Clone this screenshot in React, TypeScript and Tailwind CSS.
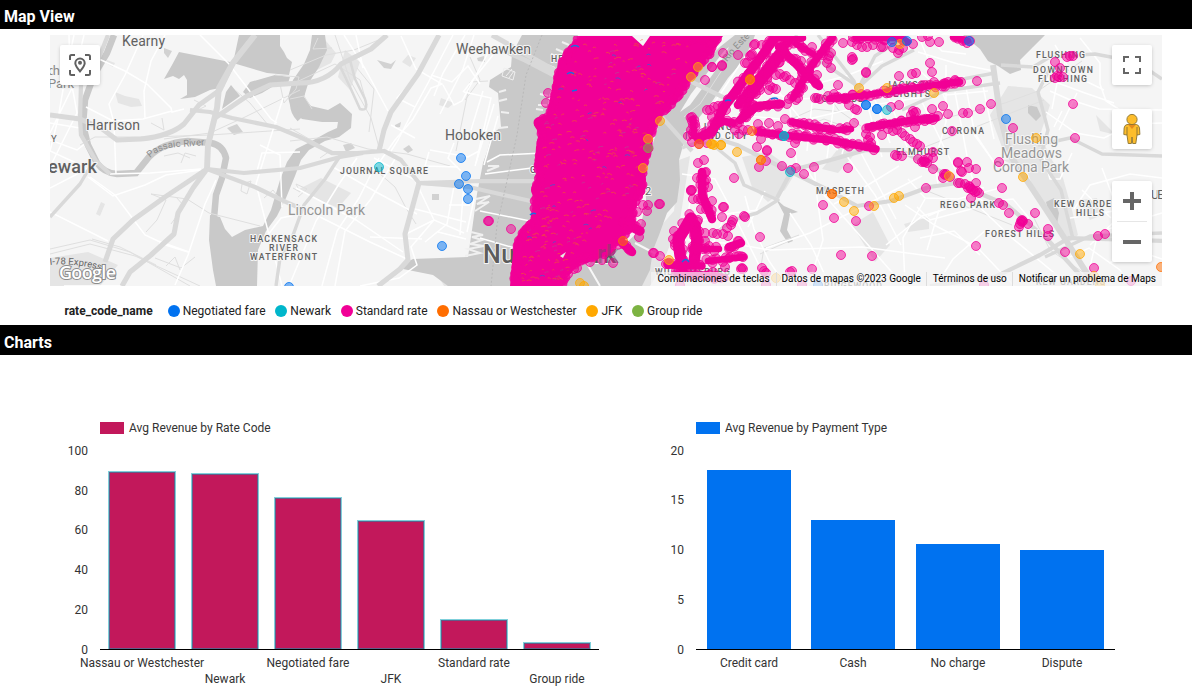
import React from "react";

type Pt = [number, number];

const PINK = "#f10096";
const BLUE = "#0072f0";
const TEAL = "#00b6cb";
const ORANGE = "#ff6d00";
const AMBER = "#ffa800";
const GREEN = "#7cb342";

const legend = [
  { name: "Negotiated fare", color: "bg-[#0072f0]" },
  { name: "Newark", color: "bg-[#00b6cb]" },
  { name: "Standard rate", color: "bg-[#f10096]" },
  { name: "Nassau or Westchester", color: "bg-[#ff6d00]" },
  { name: "JFK", color: "bg-[#ffa800]" },
  { name: "Group ride", color: "bg-[#7cb342]" },
];

const water = [
  "M179 52L230 62L224 87L210 90L195 97L180 99L187 95L187 80L184 75L179 79L173 76L164 79L172 65Z",
  "M239 35L280 35L280 46L284 52L287 58L292 62L289 75L278 74L267 73L233 63Z",
  "M231 85L240 96L222 109L226 92Z M250 82L275 75L290 77L288 83L272 87L262 93L250 98L243 92Z",
  "M312 35H325L327 50L319 67L308 84L304 97L311 106L328 110L340 103L352 114L351 128L339 137L325 141L309 150L301 160L295 176L286 198L277 216L266 231L258 250L257 286H216L213 270L209 240L210 215L220 217L225 229L232 237L245 230L263 226L271 210L280 180L287 162L296 149L310 142L328 132L337 128L338 122L322 122L302 119L291 109L288 97L293 80L304 64L310 50Z",
  "M522 35L512 54L511 67L490 80L489 87L498 93L501 127L492 134L487 152L483 163L477 194L472 230L468 257L413 259L401 265L398 268L433 275L448 286H512L540 190L549 95L578 35Z",
  "M735 35L721 46L704 62L688 88L664 107L654 140L645 168L646 200L640 230L622 247L580 265L560 286H642L650 270L653 250L659 235L667 213L677 202L680 180L679 160L684 142L697 120L711 103L728 78L748 55L755 35Z",
  "M963 35H1045L1033 47L1020 60L1021 70L1010 74L998 66L988 61L980 49Z",
  "M1046 202l8 -4l5 15l-2 11l-6 -4Z M1028 105l9 2l4 9l-5 5l-8 -8Z",
  "M776 199l8 7l14 6l-8 2l-3 16l6 11l-5 2l-8 -12l4 -17Z",
];

const parks = [
  "M1008 86L1032 88L1050 105L1040 135L1052 160L1063 178L1072 210L1078 235L1066 245L1050 215L1034 190L1025 165L1003 150L990 115Z",
  "M115 92L125 96L139 99L142 106L131 107L118 103Z",
  "M50 258L88 252L118 265L100 286H50Z",
  "M101 202l4 2l-5 12l-4 -2Z M107 60l8 3l-2 4l-7 -4Z",
  "M742 157L768 152L796 172L785 190L768 202L752 187Z",
  "M841 145L860 148L838 173L822 169Z",
  "M852 225L873 212L890 245L875 262Z",
  "M297 190l24 -12l30 15l-13 15Z",
  "M904 224l25 -7v12l-21 3Z M1003 160l30 -3l28 17l-19 5Z",
  "M321 35l15 18l-5 10l-20 10l8 -20Z M345 50l15 12l-10 28l-12 -13Z",
  "M408 55l8 3l-6 9l-8 -5Z M441 98l13 5l-6 5l-9 -3Z",
  "M653 235L674 211L679 160L690 156L680 220L660 270L650 286H640Z",
  "M1080 200l17 -2l3 18l-10 4Z M1096 115l20 20l-16 -4Z",
  "M434 269l30 2l8 15h-28Z",
];

const darkPatches = "M164 48l8 3l-4 7l-4 -5Z M227 128l10 -4l6 8l-9 3Z M403 149l6 -4l4 5l-5 3Z M395 125l6 -3l-1 5l-5 1Z M477 58l7 -2l1 6l-7 -1Z M377 60l14 4l5 -4l-5 9l-7 -1Z M432 194h7v6h-7Z M343 145l8 -2l4 5l-9 4Z";

const rivers = [
  "M114 35L107 53L94 75L85 100L83 125L88 145L97 163Q104 173 117 174L136 173L149 157Q162 143 188 141L211 143Q223 145 226 158L222 178L216 195L214 218",
  "M303 92Q286 104 300 119",
];

const highways: { d: string; w: number }[] = [
  { d: "M108 35L98 60L81 84L80 119L81 135L96 161L110 174", w: 5 },
  { d: "M50 115L80 119M80 119L101 128L117 140L141 139Q170 136 184 124L199 105L220 90L234 61L255 35", w: 6 },
  { d: "M255 35L233 63L219 88L217 108L208 145L207 169", w: 7 },
  { d: "M190 110L210 112L232 118L276 127L300 137L332 153L357 153L384 151L401 160L419 183L456 184", w: 5 },
  { d: "M300 83L270 85L247 96L215 118M300 83Q326 83 341 64L371 49L387 35", w: 6 },
  { d: "M439 35L418 74L391 112L384 130L379 151", w: 6 },
  { d: "M207 169L165 197L133 220L113 239L105 262", w: 6 },
  { d: "M207 169L193 188L178 213L174 234L151 255L130 272L122 286", w: 6 },
  { d: "M207 169L244 173L300 168L340 157L363 153", w: 5 },
  { d: "M207 169L255 187L286 202L302 209", w: 5 },
  { d: "M419 183L405 234L408 260L400 269L378 286", w: 6 },
  { d: "M340 156L325 179L304 205L292 238L280 258L276 286", w: 4 },
  { d: "M50 217L80 184L90 167", w: 4 },
  { d: "M339 64L350 87L360 109Q369 112 365 99L355 79L350 60", w: 3 },
  { d: "M419 183L469 187L535 202M419 183L480 181L542 181", w: 5 },
  { d: "M498 48L525 60L575 86M492 35L575 82", w: 6 },
  { d: "M682 148Q700 139 713 145L735 163L744 185L778 200L757 213L733 220L710 237L680 256", w: 4 },
  { d: "M690 130L737 145L777 165L832 192L857 206L891 201L929 187L965 182", w: 5 },
  { d: "M777 198L792 170L827 161L866 150L899 150L930 165L967 188L1007 205L1048 240L1090 286", w: 5 },
  { d: "M993 65L1000 115L1010 155L1047 211L1067 242L1095 286", w: 7 },
  { d: "M930 286L995 277L1040 255L1069 238L1162 241", w: 5 },
  { d: "M1049 70L1038 92L1048 130L1040 158L1061 190L1073 239", w: 4 },
  { d: "M1038 145L1070 138L1102 154L1162 156", w: 4 },
  { d: "M1001 65L1033 67L1050 57L1095 54L1137 62L1162 79", w: 4 },
  { d: "M795 35L817 59L859 87L875 56L895 43", w: 4 },
  { d: "M859 87L882 66L914 50M818 35L854 81L859 97", w: 4 },
  { d: "M920 87L995 73M902 110L944 91L1000 83", w: 4 },
  { d: "M1045 257L1090 236L1162 233", w: 4 },
  { d: "M692 82L737 104M660 115L692 151", w: 5 },
];

const minorGray = [
  "M50 249L90 240L130 252L190 286M50 254L90 244L135 256L200 286M92 239L120 247L156 265",
  "M151 194L166 200L157 220L146 232M151 194L187 199L209 213L260 226M176 197l8 9l-13 18",
  "M80 145L95 137L150 137L210 135L300 129M164 139L210 133L245 117L300 90",
  "M192 113L206 106L194 100M235 90L250 103L268 125M275 75L299 77L296 89L284 103L280 84",
  "M164 156L178 153L190 158M181 163l4 -10l11 3M151 123l13 7l-2 -12M155 258l26 10l14 -11M166 266l9 -9l5 13",
  "M290 70L326 55L354 50L381 39M335 35L350 80L371 118L380 151M357 68L374 89L369 132",
  "M290 85L335 64L360 80L367 105M318 38L313 49L332 48M290 99l14 -3l8 13",
  "M290 128L330 151L320 158M290 141L327 137L368 149L407 154L450 166",
  "M293 188l7 4l-4 -8l11 5l-9 8M379 173L395 187L406 208L416 224",
  "M242 184l9 -3l-4 13l-6 -3ZM264 198l9 -8l6 8",
  "M470 57L480 80L465 100M456 151L470 82L488 81",
  "M780 124L814 109L841 112L861 126M780 137L824 119L854 130",
  "M684 117L700 104L722 70M783 58L814 76L840 112",
  "M930 122L1005 103L1038 91L1082 61M925 147L1044 100",
  "M1030 210L1050 250L1090 277M920 188L962 205L1012 225",
  "M761 266L764 248L799 235M760 254L787 242M688 200L710 207",
];

const streets = [
  "M143 35L125 75L109 104L114 123L116 174M50 140L77 150L86 143M50 123L80 128M165 35L151 61L144 91L145 119M99 59L125 71L147 84L171 108L172 112L184 109M172 111L143 119L113 121L86 107",
  "M74 35L65 78L58 119L50 151M69 35L70 75L77 113L50 167M84 35L71 90L50 133M50 212L108 241M90 177L115 195L145 235L158 241L189 252",
  "M50 151L74 162L87 169L50 188M88 177L113 196L145 185L166 175L201 170M110 174L150 173L201 169",
  "M200 35L229 64L271 119L277 123M216 180L205 204L188 255L175 285M188 252L159 243M64 286L120 286M257 171L262 153L300 152",
  "M283 98L256 184L282 286M260 145L280 155L282 207M264 240L281 218L295 215",
  "M344 35L364 67L388 111M356 35L363 68M401 36L416 69L442 84L431 88L413 119L395 140L376 167",
  "M453 35L443 54L428 83L415 107L398 140L391 151M465 35L443 73L434 96M443 85L454 105L462 101L490 49",
  "M474 35L463 69L440 114M464 92L491 98L476 163M454 143L448 158L461 171M463 92L493 55",
  "M391 125L415 138M415 107L397 98L414 79M430 150L468 157L479 151M429 152L425 166L458 167",
  "M357 158L339 184L316 221L289 286M379 158L359 198L337 231L322 286M395 159L371 199L345 231L335 286",
  "M374 158L415 180L434 220L464 233M333 167L376 192L417 214M296 188L356 220L403 252M320 217L370 242L407 259",
  "M434 220L411 247L417 265L399 278L360 286M404 235L434 220M415 209L466 222M370 237L422 239",
  "M454 186L447 224L425 242M464 183L460 235M449 205H470M474 199L467 232M438 232L466 239",
  "M483 91L471 130M494 104L475 166M498 116L484 165M431 75L452 82L468 66L480 84",
  "M487 162L500 155L543 153M485 174L540 167M480 211L540 223M480 238L525 251",
  "M714 113L715 102L754 43M720 127L754 72L775 36M748 115L779 69M750 116L800 121L860 107L930 96",
  "M753 69L779 92L800 118L838 150M756 92L802 99L862 94M790 109L798 175M812 103L807 151M834 102L827 158M855 108L842 154",
  "M865 96L882 157M872 91L890 143M885 88L907 147M898 86L921 155M811 85L846 76L883 61",
  "M682 174L715 179L729 205L709 254M692 185L684 248M680 226L732 213L758 210M688 240L735 244L770 250L862 247L945 258",
  "M745 196L754 229L769 261L786 286M733 213L757 261L768 286M765 191L748 227M790 213L811 245L830 286M766 248L810 233L883 196L922 176",
  "M807 170L825 196L855 230L904 286M814 163L817 197L823 240L808 286M834 204L858 191L899 166M846 155L875 195L901 245M860 151L896 219",
  "M926 35L942 51L966 54M918 52L958 64L994 71M918 35L935 76L949 108M946 65L946 122L938 150",
  "M964 76L975 136L997 166M981 77L994 139M920 71L946 95L988 91M922 102L946 151L962 183M955 92L967 156",
  "M933 153L938 184L984 188M908 179L925 198L958 199L1000 188M976 135L997 167M966 158L979 199L1003 210",
  "M905 205L936 226L977 247L1014 286M925 199L903 238L905 284M928 216L957 203M920 238L954 231L980 255M939 210L927 250M970 198L1012 238L1064 281",
  "M937 284L953 259L987 229M917 207L930 220L975 208M886 245L922 216L946 209M983 202L1013 199L1029 218",
  "M1047 79L1085 93L1114 103M1055 45L1073 75L1104 90M1066 60L1057 83L1052 109M1080 38L1100 63L1100 84L1106 101L1131 117",
  "M1050 91L1068 99L1099 109L1162 110M1046 112L1076 133L1104 138L1132 124L1162 123M1062 111L1054 127M1077 93L1059 130",
  "M1043 154L1050 179L1060 179L1072 153M1074 209L1090 185L1130 174L1162 178M1102 168L1120 216L1090 245M1082 190L1111 218",
  "M1070 218L1114 211L1144 207M1070 257L1089 248L1120 270L1130 286M1090 267L1098 232L1162 213M1109 263L1138 251L1162 259",
];

const manhattan =
  "M580 36L572 45L560 60L554 77L551 95L546 116L538 117Q531 120 535 127L539 133L536 147L535 163L537 177L532 186Q529 192 535 197L533 203L530 222L520 231L514 243L512 263L510 286H563L567 272L580 263L600 258L612 248L622 238L635 222L633 207L645 190L646 180L643 163L650 153L652 137L658 120L667 108L677 100L687 83L700 67L713 50L723 36H650L643 46L632 36Z";

// Shoreline pickups that give the dense borough area its beaded edge.
const shore: Pt[][] = [
  [[580, 38], [563, 62], [558, 80], [555, 98], [551, 116], [539, 122], [543, 135], [540, 160], [540, 178], [536, 192], [536, 220], [524, 232], [518, 246], [515, 284]],
  [[562, 284], [568, 268], [585, 258], [607, 252], [618, 240], [631, 224], [632, 205], [641, 190], [642, 164], [647, 150], [648, 138], [655, 119], [676, 97], [697, 68], [719, 38]],
];

const bands: { p: Pt[]; w: number }[] = [
  { p: [[775, 38], [724, 107], [712, 132], [698, 138]], w: 12 },
  { p: [[791, 38], [773, 60], [738, 105]], w: 11 },
  { p: [[783, 55], [750, 98], [742, 118]], w: 9 },
  { p: [[832, 38], [812, 65], [793, 98]], w: 10 },
  { p: [[779, 47], [798, 66], [819, 86]], w: 11 },
  { p: [[775, 38], [803, 38]], w: 9 },
  { p: [[796, 44], [813, 54]], w: 9 },
  { p: [[740, 120], [757, 106], [781, 104]], w: 11 },
  { p: [[693, 119], [694, 136]], w: 9 },
  { p: [[706, 134], [722, 121], [733, 123]], w: 10 },
  { p: [[758, 132], [790, 136], [830, 140], [876, 149]], w: 10 },
  { p: [[792, 122], [809, 126], [834, 130]], w: 10 },
  { p: [[839, 130], [851, 129]], w: 9 },
  { p: [[868, 127], [914, 120], [936, 118]], w: 10 },
  { p: [[829, 99], [866, 95], [914, 88], [960, 82]], w: 9 },
  { p: [[856, 38], [900, 38], [908, 42]], w: 9 },
  { p: [[953, 37], [968, 41]], w: 9 },
  { p: [[702, 172], [702, 194], [712, 219]], w: 11 },
  { p: [[691, 218], [684, 230], [678, 240], [680, 255], [683, 266]], w: 14 },
  { p: [[695, 225], [697, 240], [694, 262]], w: 14 },
  { p: [[692, 249], [719, 249]], w: 9 },
  { p: [[708, 261], [744, 257]], w: 9 },
  { p: [[668, 265], [702, 266]], w: 10 },
  { p: [[729, 247], [741, 243]], w: 11 },
  { p: [[678, 274], [725, 278]], w: 10 },
  { p: [[619, 240], [632, 252]], w: 11 },
  { p: [[622, 222], [640, 231]], w: 12 },
  { p: [[661, 38], [715, 40]], w: 8 },
];

const hash = (n: number) => {
  const v = Math.sin(n * 127.1 + 11.7) * 43758.5453;
  return v - Math.floor(v);
};

// Places points along a polyline at a fixed step, each pushed off the line by up to `spread`.
function along(line: Pt[], step: number, spread: number, seed: number): Pt[] {
  const out: Pt[] = [];
  line.slice(1).forEach((b, i) => {
    const a = line[i];
    const n = Math.max(1, Math.round(Math.hypot(b[0] - a[0], b[1] - a[1]) / step));
    for (let k = 0; k < n; k++) {
      const r = seed * 97 + i * 31 + k;
      out.push([
        a[0] + ((b[0] - a[0]) * k) / n + (hash(r) - 0.5) * 2 * spread,
        a[1] + ((b[1] - a[1]) * k) / n + (hash(r + 0.37) - 0.5) * 2 * spread,
      ]);
    }
  });
  return out;
}

const bandDots = bands.flatMap((b, i) => along(b.p, 3.2, b.w / 3.6, i + 1));
const shoreDots = shore.flatMap((s, i) => along(s, 3, 1.6, i + 60));

const pink: Pt[] = [
  [488, 221], [489, 221], [511, 229], [548, 93], [546, 103], [643, 205], [648, 205], [659, 204], [660, 204], [647, 211], [637, 212],
  [639, 237], [641, 224], [613, 263], [602, 260], [590, 262], [577, 268], [574, 269], [568, 274], [653, 253], [654, 253], [660, 256],
  [723, 53], [738, 55], [754, 45], [755, 44], [762, 45], [712, 67], [712, 67], [722, 65], [722, 66], [705, 80], [745, 63], [747, 63], [751, 55], [750, 56], [752, 54],
  [812, 47], [817, 75], [829, 56], [831, 53], [827, 63], [831, 68], [828, 59], [843, 43], [852, 57], [853, 59], [852, 60], [866, 73], [866, 72],
  [798, 64], [801, 61], [796, 59], [776, 75], [784, 77], [780, 74], [786, 76], [770, 86], [773, 88], [776, 89], [769, 90],
  [756, 94], [760, 90], [790, 80], [795, 83], [800, 87], [803, 88], [796, 93], [789, 99], [796, 100], [798, 98],
  [898, 53], [899, 50], [899, 76], [912, 74], [916, 73], [838, 85], [815, 98], [817, 98], [820, 99], [828, 96], [834, 94], [838, 97], [845, 99], [785, 119], [769, 123], [778, 126], [758, 124], [761, 139], [757, 147],
  [767, 151], [791, 153], [795, 143], [787, 104], [718, 106], [714, 107], [710, 110], [707, 110], [712, 117], [692, 117], [692, 121], [693, 125],
  [695, 124], [691, 130], [688, 136], [692, 142], [699, 144], [707, 143], [735, 130], [739, 134], [743, 130], [748, 130], [734, 122], [737, 124], [849, 105], [857, 110], [855, 109],
  [899, 105], [891, 107], [882, 135], [915, 127], [913, 111], [916, 112], [914, 113], [911, 115], [854, 123], [870, 137], [871, 143], [868, 140], [866, 134],
  [888, 129], [893, 131], [897, 130], [902, 133], [905, 136], [910, 139], [913, 142], [917, 144], [920, 146], [895, 155], [897, 156], [902, 156],
  [852, 42], [853, 37], [857, 45], [862, 47], [867, 47], [873, 45], [881, 47], [883, 47], [893, 48], [903, 48], [913, 44], [922, 37], [928, 36], [930, 42], [939, 42],
  [967, 43], [970, 41], [930, 63], [932, 72], [934, 82], [945, 83], [948, 82], [943, 84], [955, 80], [961, 82], [958, 82], [977, 81], [932, 109], [943, 106],
  [948, 114], [938, 116], [932, 118], [928, 119], [963, 113], [968, 113], [980, 109], [991, 104], [952, 131], [1013, 128],
  [1055, 62], [1067, 57], [1070, 56], [1073, 56], [1060, 68], [1055, 78], [1057, 76], [1059, 77], [1063, 77], [1073, 104], [1075, 138],
  [933, 152], [928, 158], [933, 158], [933, 169], [925, 162], [924, 160], [922, 162], [918, 159], [927, 163], [924, 162], [945, 175], [944, 174], [946, 174], [943, 178], [950, 177],
  [958, 163], [958, 162], [967, 162], [969, 168], [976, 169], [962, 172], [961, 171], [958, 183], [960, 183], [965, 184], [970, 187], [969, 186], [971, 189], [968, 188], [976, 183], [979, 193],
  [977, 191], [975, 192], [973, 190], [971, 198], [999, 162], [926, 188], [1002, 188], [999, 203], [1003, 205], [1009, 213], [1035, 213], [1022, 222], [1021, 221], [1023, 221], [1022, 220],
  [1020, 224], [1028, 224], [1019, 227], [1048, 229], [1048, 236], [976, 246], [1065, 252], [1098, 236], [1105, 234], [1094, 268], [1131, 281], [984, 285],
  [698, 163], [704, 160], [734, 178], [759, 167], [766, 161], [767, 150], [782, 166], [796, 168], [791, 170], [804, 174], [814, 167], [848, 168],
  [823, 205], [834, 218], [856, 221], [869, 206], [841, 255], [872, 256], [760, 237], [745, 217], [744, 216], [812, 269], [792, 271], [790, 272], [762, 268],
  [766, 273], [764, 271], [766, 285], [802, 285], [723, 207], [724, 207], [722, 217], [712, 201], [701, 209], [732, 222], [731, 225], [733, 220], [727, 228], [713, 233], [717, 234], [723, 234],
  [728, 236], [739, 241], [732, 247], [743, 257], [743, 269], [705, 233], [691, 190], [692, 190], [691, 191], [693, 199], [698, 199], [706, 172], [706, 180], [708, 187], [697, 178],
  [674, 231], [673, 239], [675, 246], [693, 219], [698, 220], [668, 264], [666, 264], [676, 271], [713, 272], [725, 267], [741, 269], [742, 268], [680, 285], [705, 241], [709, 246],
];
const amber: Pt[] = [
  [580, 283], [584, 286], [660, 121], [648, 139], [643, 168], [669, 260], [698, 67], [691, 77], [750, 80], [712, 144], [714, 145], [711, 144], [721, 145], [721, 145],
  [737, 152], [761, 160], [859, 88], [900, 44], [934, 93], [1036, 138], [1023, 177], [1080, 254], [949, 176], [844, 202], [854, 211],
  [874, 206], [894, 198], [899, 196], [776, 278], [1094, 276], [1100, 285], [887, 88],
];
const blue: Pt[] = [
  [461, 158], [466, 176], [459, 184], [468, 189], [468, 199], [442, 246], [289, 287], [892, 42], [907, 41], [866, 105], [866, 105],
  [877, 109], [877, 109], [1006, 119], [969, 41], [818, 285],
];
const orange: Pt[] = [[699, 144], [752, 131], [750, 79], [832, 194], [832, 194], [1161, 267], [623, 241], [761, 160]];
const teal: Pt[] = [[379, 167], [790, 172], [887, 110], [784, 136], [784, 136]];
const green: Pt[] = [[648, 148]];

const flecks = Array.from({ length: 330 }, (_, i) => {
  const y = 40 + hash(i) * 242;
  const left = y < 120 ? 582 - (y - 36) * 0.45 : y < 220 ? 544 - (y - 120) * 0.08 : 529 - (y - 220) * 0.2;
  const right = y < 110 ? 708 - (y - 36) * 0.65 : y < 195 ? 651 - (y - 110) * 0.13 : 630 - (y - 195) * 0.75;
  const x = left + hash(i + 500.5) * Math.max(0, right - left - 5);
  const w = 2 + Math.floor(hash(i + 900.3) * 4);
  return { d: `M${x.toFixed(1)} ${y.toFixed(1)}q${w / 2} -1.5 ${w} ${(i % 3) - 1}`, c: i % 17 === 0 ? "#1670e0" : i % 6 === 0 ? "#b44b92" : "#f4582f" };
});

function Dots({ pts, color, fill = 0.5 }: { pts: Pt[]; color: string; fill?: number }) {
  return (
    <g fill={color} fillOpacity={fill} stroke={color} strokeOpacity={0.75} strokeWidth={1}>
      {pts.map(([x, y], i) => (
        <circle key={i} cx={x} cy={y} r={4.5} />
      ))}
    </g>
  );
}

type Label = { t: string; x: number; y: number; w: number; s?: number; c?: string; b?: number };
const labels: Label[] = [
  { t: "Kearny", x: 122, y: 46, w: 43, s: 14 },
  { t: "Harrison", x: 86, y: 130, w: 54, s: 14 },
  { t: "ewark", x: 48, y: 173, w: 49, s: 18, b: 500 },
  { t: "ch", x: 48, y: 75, w: 12, s: 13, c: "#8a8a8a" },
  { t: "Park", x: 48, y: 88, w: 26, s: 13, c: "#8a8a8a" },
  { t: "Y", x: 51, y: 142, w: 6, s: 9.5 },
  { t: "Weehawken", x: 456, y: 54, w: 75, s: 14 },
  { t: "Hoboken", x: 445, y: 140, w: 56, s: 14 },
  { t: "JOURNAL SQUARE", x: 340, y: 174, w: 88 },
  { t: "Lincoln Park", x: 288, y: 215, w: 77, s: 14, c: "#959595" },
  { t: "HACKENSACK", x: 250, y: 242, w: 67 },
  { t: "RIVER", x: 269, y: 251, w: 29 },
  { t: "WATERFRONT", x: 250, y: 260, w: 67 },
  { t: "HELL'S KITCHEN", x: 551, y: 62, w: 80 },
  { t: "G", x: 530, y: 173, w: 7 },
  { t: "2", x: 645, y: 195, w: 7, s: 11 },
  { t: "LONG", x: 704, y: 130, w: 28 },
  { t: "ISLAND CITY", x: 685, y: 139, w: 62 },
  { t: "WOODSIDE", x: 813, y: 102, w: 50 },
  { t: "JACKSON", x: 886, y: 88, w: 46 },
  { t: "HEIGHTS", x: 886, y: 97, w: 44 },
  { t: "ELMHURST", x: 896, y: 155, w: 53 },
  { t: "CORONA", x: 942, y: 134, w: 42 },
  { t: "FLUSHING", x: 1036, y: 58, w: 49 },
  { t: "DOWNTOWN", x: 1033, y: 73, w: 60 },
  { t: "FLUSHING", x: 1038, y: 82, w: 49 },
  { t: "Flushing", x: 1005, y: 144, w: 53, s: 14, c: "#959595" },
  { t: "Meadows", x: 1001, y: 158, w: 61, s: 14, c: "#959595" },
  { t: "Corona Park", x: 993, y: 172, w: 76, s: 14, c: "#959595" },
  { t: "REGO PARK", x: 940, y: 208, w: 55 },
  { t: "MASPETH", x: 816, y: 194, w: 48 },
  { t: "FOREST HILLS", x: 985, y: 237, w: 69 },
  { t: "KEW GARDE", x: 1054, y: 207, w: 57 },
  { t: "HILLS", x: 1076, y: 216, w: 28 },
  { t: "UE", x: 1151, y: 199, w: 13, s: 12 },
  { t: "WILLIAMSBURG", x: 655, y: 275, w: 75 },
  { t: "RIDGEWOOD", x: 824, y: 289, w: 58 },
  { t: "KEW GARDENS", x: 1036, y: 285, w: 69 },
];

function MapCanvas() {
  return (
    <svg className="block h-[251px] w-[1112px]" viewBox="50 35 1112 251" fontFamily="Roboto, sans-serif">
      <rect x="50" y="35" width="1112" height="251" fill="#f5f5f5" />
      <g fill="#e5e5e5">{parks.map((d) => <path key={d} d={d} />)}</g>
      <g fill="#c9c9c9">{water.map((d) => <path key={d} d={d} />)}</g>
      <path d={darkPatches} fill="#d2d2d2" />
      <g stroke="#c9c9c9" strokeWidth="6.5" fill="none">{rivers.map((d) => <path key={d} d={d} />)}</g>
      <path d="M680 112L691 94L724 51L729 47L716 70L690 105Z" fill="#f5f5f5" />
      <path d="M471 232l12 3l-11 2l10 3l-12 4l14 2l-16 3l12 4l-15 3M476 199l14 -3l-13 8l12 -2l-14 9M488 166l11 0l-12 5M499 92l7 -2M499 101l8 -2M501 112l8 1M499 128l9 -1M547 105l-9 0M543 110l-7 -1M548 96l-8 -2M560 58l-9 -4M569 45l-7 -3M563 52l-7 -3M555 68l-8 -3" stroke="#f0f0f0" strokeWidth="2" fill="none" />
      <path d="M504 68l11 4l-2 8l-11 -4ZM506 76l6 -7M509 78l5 -7" fill="none" stroke="#efefef" strokeWidth="1" />
      <g stroke="#dfdfdf" strokeWidth="1" fill="none">{minorGray.map((d) => <path key={d} d={d} />)}</g>
      <g stroke="#ffffff" strokeWidth="1.5" fill="none">{streets.map((d) => <path key={d} d={d} />)}</g>
      <g stroke="#d9d9d9" fill="none" strokeLinejoin="round">
        {highways.map((h) => <path key={h.d} d={h.d} strokeWidth={h.w * 0.85} />)}
      </g>
      <path d="M542 35L526 75L517 135L505 190L497 225L491 286" stroke="#b4b4b4" strokeWidth="0.8" strokeDasharray="2 2" fill="none" />
      <path d="M586 262L600 286M635 243L658 255M658 255L680 265" stroke="#f7f7f7" strokeWidth="2" />
      <path id="passaic" d="M150 158Q160 148 178 147T206 145" fill="none" />
      <path id="express" d="M50 265Q72 262 104 271" fill="none" />
      <path id="este" d="M727 62Q740 45 760 28" fill="none" />
      <g fontSize="9.5" fill="#8d8d8d">
        <text><textPath href="#passaic">Passaic River</textPath></text>
        <text fill="#666"><textPath href="#express">I-78 Express</textPath></text>
        <text><textPath href="#este">Río Este</textPath></text>
      </g>
      <g paintOrder="stroke" stroke="#f5f5f5" strokeWidth="2" strokeLinejoin="round">
        {labels.map((l) => (
          <text key={l.t + l.x + l.y} x={l.x} y={l.y} fontSize={l.s ?? 8.7} fontWeight={l.b ?? (l.s ? 400 : 500)} fill={l.c ?? "#616161"} textLength={l.w}>
            {l.t}
          </text>
        ))}
        <text x="483" y="263" fontSize="25" fontWeight="500" fill="#5c5c5c" textLength="133">Nueva York</text>
      </g>
      <svg x="50" y="36" width="1112" height="250" viewBox="50 36 1112 250">
        <path d={manhattan} fill={PINK} />
        <g fill="none" stroke={PINK} strokeLinecap="round" strokeLinejoin="round">
          {bands.map((b, i) => <path key={i} d={"M" + b.p.map((q) => q.join(" ")).join("L")} strokeWidth={b.w - 2.5} />)}
        </g>
        <Dots pts={bandDots} color={PINK} />
        <Dots pts={shoreDots} color={PINK} fill={0.8} />
        <g fill="none" strokeWidth="0.9" opacity="0.7">
          {flecks.map((f, i) => <path key={i} d={f.d} stroke={f.c} />)}
        </g>
        <path d="M571 47q4 -3 8 0M567 74q4 -3 7 0M572 91l5 -1M530 215q3 -3 6 -1M725 101q4 -2 6 0M771 99q4 -2 7 0M682 262q4 -5 7 0" stroke="#1670e0" strokeWidth="1.5" fill="none" />
        <path d="M560 256l6 -4l-3 6Z" fill="#e8e8e8" />
        <Dots pts={pink} color={PINK} />
        <Dots pts={amber} color={AMBER} />
        <Dots pts={blue} color={BLUE} />
        <Dots pts={green} color={GREEN} />
        <Dots pts={orange} color={ORANGE} />
        <Dots pts={teal} color={TEAL} />
        <text x="597" y="263" fontSize="25" fontWeight="500" fill="#5c5c5c" fillOpacity="0.45">rk</text>
      </svg>
      <text x="59" y="279" fontFamily="'Open Sans', Lato, sans-serif" fontSize="18" fontWeight="600" fill="#fff" stroke="#8c8c8c" strokeWidth="2" paintOrder="stroke" textLength="57">Google</text>
    </svg>
  );
}

function PinIcon() {
  return (
    <svg width="24" height="24" viewBox="0 0 24 24" fill="none" stroke="#616161" strokeWidth="2">
      <path d="M2 7V3.5Q2 2 3.5 2H7M17 2h3.5Q22 2 22 3.5V7M22 17v3.5Q22 22 20.500 22H17M7 22H3.500Q2 22 2 20.500V17" />
      <path d="M12 18.400C8.800 14.500 7.300 12.500 7.300 10.200a4.700 4.700 0 0 1 9.400 0c0 2.300-1.500 4.300-4.700 8.200Z" />
      <circle cx="12" cy="9.700" r="2" fill="#616161" stroke="none" />
    </svg>
  );
}

function Pegman() {
  return (
    <svg width="20" height="32" viewBox="0 0 20 32" stroke="#8a7330" strokeWidth="0.9" strokeLinejoin="round">
      <path d="M5 11.500Q2.500 12 2.100 15L1.800 21.500L5 22L6.200 30.500H9.400L10 24L10.700 30.500H13.800L15 22L17.900 21.500L17.500 15Q17 12 14.500 11.500Z" fill="#fdbd2c" />
      <path d="M6 11.500H14L10 16Z" fill="#e58a1f" stroke="none" />
      <path d="M5 14V22M15 14V22" fill="none" />
      <circle cx="10" cy="6.500" r="5.100" fill="#fdbd2c" />
    </svg>
  );
}

function ControlButton({ children }: { children: React.ReactNode }) {
  return (
    <div className="flex h-10 w-10 items-center justify-center rounded-[2px] bg-white shadow-[0_1px_4px_-1px_rgba(0,0,0,0.3)]">{children}</div>
  );
}

function MapPanel() {
  return (
    <div className="relative ml-[50px] h-[251px] w-[1112px] overflow-hidden">
      <MapCanvas />
      <div className="absolute top-[10px] left-[10px]"><ControlButton><PinIcon /></ControlButton></div>
      <div className="absolute top-[10px] right-[10px] flex flex-col">
        <ControlButton>
          <svg width="18" height="18" viewBox="0 0 18 18" fill="none" stroke="#666" strokeWidth="2">
            <path d="M1 6V1H6M12 1H17V6M17 12V17H12M6 17H1V12" />
          </svg>
        </ControlButton>
        <div className="mt-6"><ControlButton><Pegman /></ControlButton></div>
        <div className="mt-8 flex h-[81px] w-10 flex-col items-center rounded-[2px] bg-white shadow-[0_1px_4px_-1px_rgba(0,0,0,0.3)]">
          <div className="flex h-10 items-center"><svg width="18" height="18"><path d="M9 0V18M0 9H18" stroke="#666" strokeWidth="4" /></svg></div>
          <div className="h-px w-[30px] bg-[#e6e6e6]" />
          <div className="flex h-10 items-center"><svg width="18" height="18"><path d="M0 9H18" stroke="#666" strokeWidth="4" /></svg></div>
        </div>
      </div>
      <div className="absolute right-0 bottom-0 flex h-[14px] items-center bg-[#f5f5f5]/70 text-[10px] leading-[14px] whitespace-nowrap text-black">
        <span className="pr-[6px] pl-[6px]">Combinaciones de teclas</span>
        <span className="border-l border-[#ddd] px-[5px]">Datos de mapas ©2023 Google</span>
        <span className="border-l border-[#ddd] pr-[5px] pl-[6px]">Términos de uso</span>
        <span className="border-l border-[#ddd] px-[6px]">Notificar un problema de Maps</span>
      </div>
    </div>
  );
}

type Bar = { label: string; x: number; top: number; low?: boolean };
type ChartProps = {
  title: string; left: number; right: number; color: string; stroke?: string; barWidth: number;
  origin: number; ticks: { v: number; y: number }[]; bars: Bar[];
};

function BarChart({ title, left, right, color, stroke, barWidth, origin, ticks, bars }: ChartProps) {
  return (
    <svg className="block h-[342px] w-[596px] overflow-visible" viewBox={`${origin} 355 596 342`} fontFamily="Roboto, sans-serif" fontSize="12" fill="#333">
      <rect x={left} y="422" width="24" height="12" fill={color} />
      <text x={left + 29} y="432">{title}</text>
      {ticks.map((t) => <text key={t.v} x={left - 12} y={t.y} textAnchor="end">{t.v}</text>)}
      {bars.map((b) => (
        <g key={b.label}>
          <rect x={b.x} y={b.top} width={barWidth} height={649 - b.top} fill={color} stroke={stroke} strokeWidth={stroke ? 2 : 0} strokeOpacity={0.5} />
          <text x={b.x + barWidth / 2} y={b.low ? 683 : 667} textAnchor="middle">{b.label}</text>
        </g>
      ))}
      <path d={`M${left} 649.5H${right}`} stroke="#000" />
    </svg>
  );
}

export default function App() {
  return (
    <div className="h-[697px] w-[1192px] overflow-hidden bg-white font-['Roboto',sans-serif]">
      <header className="flex h-[29px] items-center bg-black pt-[5px] pl-1 text-[16px] font-bold text-white">Map View</header>
      <section className="pt-[6px]">
        <MapPanel />
        <div className="flex h-[39px] items-center pt-[11px] pl-[64.500px] text-[12px] leading-4 text-[#212121]">
          <span className="mr-[15px] font-bold">rate_code_name</span>
          {legend.map((l) => (
            <div key={l.name} className="mr-[9.800px] flex items-center gap-[3px]">
              <span className={`h-3 w-3 rounded-full ${l.color}`} />
              <span>{l.name}</span>
            </div>
          ))}
        </div>
      </section>
      <header className="flex h-[30px] items-center bg-black pt-[5px] pl-1 text-[16px] font-bold text-white">Charts</header>
      <main className="grid grid-cols-2">
        <BarChart
          title="Avg Revenue by Rate Code" origin={0} left={100} right={599} color="#c2185b" stroke="#00a1b8" barWidth={66}
          ticks={[{ v: 100, y: 455 }, { v: 80, y: 495 }, { v: 60, y: 534 }, { v: 40, y: 574 }, { v: 20, y: 614 }, { v: 0, y: 654 }]}
          bars={[
            { label: "Nassau or Westchester", x: 109, top: 472 },
            { label: "Newark", x: 192, top: 474, low: true },
            { label: "Negotiated fare", x: 275, top: 498 },
            { label: "JFK", x: 358, top: 521, low: true },
            { label: "Standard rate", x: 441, top: 620 },
            { label: "Group ride", x: 524, top: 643, low: true },
          ]}
        />
        <BarChart
          title="Avg Revenue by Payment Type" origin={596} left={696} right={1115} color="#0072f0" barWidth={84}
          ticks={[{ v: 20, y: 455 }, { v: 15, y: 504 }, { v: 10, y: 554 }, { v: 5, y: 604 }, { v: 0, y: 654 }]}
          bars={[
            { label: "Credit card", x: 707, top: 470 },
            { label: "Cash", x: 811, top: 520 },
            { label: "No charge", x: 916, top: 544 },
            { label: "Dispute", x: 1020, top: 550 },
          ]}
        />
      </main>
    </div>
  );
}
